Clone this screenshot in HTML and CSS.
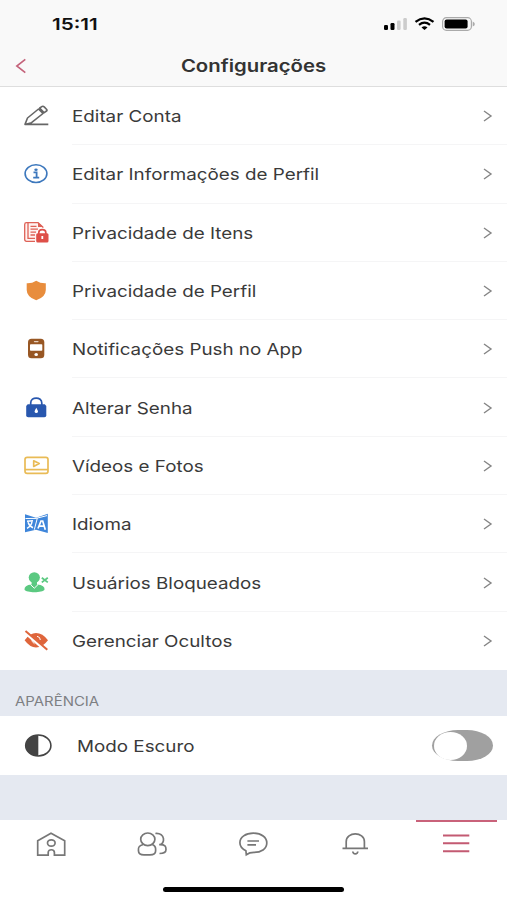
FILE: index.html
```html
<!DOCTYPE html>
<html lang="pt-BR">
<head>
<meta charset="utf-8">
<meta name="viewport" content="width=device-width, initial-scale=1">
<title>Configurações</title>
<link rel="stylesheet" href="styles.css">
</head>
<body>
<div class="screen">
  <header class="top">
    <div class="status">
      <span class="time">15:11</span>
      <svg class="status-icons" width="94" height="16" viewBox="0 0 94 16">
        <rect x="1" y="9" width="4" height="5" rx="1.2"/>
        <rect x="7.5" y="7" width="4" height="7" rx="1.2"/>
        <rect x="14" y="4.500" width="3.600" height="9.500" rx="1.200" fill="#ccc"/>
        <rect x="20.300" y="2" width="3.600" height="12" rx="1.200" fill="#ccc"/>
        <path d="M32.500 5.800Q41.500-1 50.500 5.800M36 8.800Q41.500 4.500 47 8.800" fill="none" stroke="#000" stroke-width="2.300"/>
        <path d="M38.500 11.500Q41.500 9 44.500 11.500L41.500 14Z"/>
        <rect x="59.600" y="1.700" width="28.800" height="12.600" rx="3.800" fill="none" stroke="#aaa" stroke-width="1.200"/>
        <rect x="61.600" y="3.600" width="23" height="9" rx="2"/>
        <path d="M89.700 5.500Q92 6.500 91.800 8Q92 9.500 89.700 10.500Z" fill="#aaa"/>
      </svg>
    </div>
    <div class="nav">
      <svg class="back" width="12" height="16" viewBox="0 0 12 16"><path d="M10.300 1.300L1.800 8L10.300 14.700"/></svg>
      <h1 class="title">Configurações</h1>
    </div>
  </header>

  <ul class="list">
    <li class="row"><svg class="icon" viewBox="0 0 30 30"><g fill="none" stroke="#666" stroke-width="1.600" stroke-linejoin="round"><path d="M4 23.400H27.300M4 23.400L6.500 17L17.500 8L22 12.500L10.500 21.700ZM18.700 7L21.200 5.400Q22.300 4.900 23.200 5.900L25.700 8.500Q26.400 9.400 25.500 10L23.200 11.700Z"/></g></svg><div class="cell"><span class="label">Editar Conta</span><svg class="chev" viewBox="0 0 10 12"><path d="M1 1L8 6L1 11"/></svg></div></li>
    <li class="row"><svg class="icon" viewBox="0 0 30 30"><ellipse cx="15" cy="14.600" rx="10.900" ry="8.900" fill="none" stroke="#3d78bd" stroke-width="1.600"/><ellipse cx="15" cy="10.700" rx="1.700" ry="1.300" fill="#3d78bd"/><path d="M12.500 13.400H15.600V18.600M12.200 18.700H18.200" fill="none" stroke="#3d78bd" stroke-width="1.800"/></svg><div class="cell"><span class="label">Editar Informações de Perfil</span><svg class="chev" viewBox="0 0 10 12"><path d="M1 1L8 6L1 11"/></svg></div></li>
    <li class="row"><svg class="icon" viewBox="0 0 30 30"><path d="M14 23.300H5.500Q3.700 23.300 3.700 21.500V6.500Q3.700 4.700 5.500 4.700H17L21.800 9V12" fill="#fff3f1" stroke="#de6257" stroke-width="1.300"/><path d="M7 4.700V20.300H14M9.500 8.300H15.500M9.500 11.200H17M9.500 14.100H15M9.500 17H14" fill="none" stroke="#de6257" stroke-width="1.300"/><path d="M17 4.200V9H22.300Z" fill="#de6257"/><path d="M17.800 16V14.500C17.800 10.700 24.800 10.700 24.800 14.500V16" fill="none" stroke="#fff" stroke-width="4"/><path d="M17.800 16V14.500C17.800 10.700 24.800 10.700 24.800 14.500V16" fill="none" stroke="#de4f48" stroke-width="1.700"/><rect x="15.200" y="15.200" width="12.300" height="9.300" rx="1.500" fill="#de4f48"/><path d="M20.400 18H22.200V21H20.400Z" fill="#fff"/></svg><div class="cell"><span class="label">Privacidade de Itens</span><svg class="chev" viewBox="0 0 10 12"><path d="M1 1L8 6L1 11"/></svg></div></li>
    <li class="row"><svg class="icon" viewBox="0 0 30 30"><path d="M15.200 4.700Q19.500 7.600 24.800 7.300V14Q24.800 21 15.200 24.300Q5.700 21 5.700 14V7.300Q11 7.600 15.200 4.700Z" fill="#e88d3d"/></svg><div class="cell"><span class="label">Privacidade de Perfil</span><svg class="chev" viewBox="0 0 10 12"><path d="M1 1L8 6L1 11"/></svg></div></li>
    <li class="row"><svg class="icon" viewBox="0 0 30 30"><rect x="7" y="4.700" width="16.300" height="19.500" rx="3.500" fill="#985724"/><rect x="9" y="10.300" width="12.300" height="6.500" rx=".8" fill="#fff"/><rect x="12.800" y="6.900" width="4.800" height="1.400" rx=".7" fill="#e5cfbd"/><ellipse cx="15.200" cy="20.500" rx="1.800" ry="1.500" fill="#fff"/></svg><div class="cell"><span class="label">Notificações Push no App</span><svg class="chev" viewBox="0 0 10 12"><path d="M1 1L8 6L1 11"/></svg></div></li>
    <li class="row"><svg class="icon" viewBox="0 0 30 30"><path d="M9.700 12V10C9.700 3.400 20.800 3.400 20.800 10V12" fill="none" stroke="#2857ae" stroke-width="1.700"/><path d="M6.700 11.200H23.800L25.300 13V22.500Q25.300 24.300 23.300 24.300H7.200Q5.200 24.300 5.200 22.500V13Z" fill="#2857ae"/><path d="M15.300 14.700L16.500 17Q18 19.800 15.300 19.900Q12.600 19.800 14.100 17Z" fill="#fff"/></svg><div class="cell"><span class="label">Alterar Senha</span><svg class="chev" viewBox="0 0 10 12"><path d="M1 1L8 6L1 11"/></svg></div></li>
    <li class="row"><svg class="icon" viewBox="0 0 30 30"><g fill="none" stroke="#e9bb56" stroke-width="1.700"><rect x="4" y="6.400" width="23" height="16" rx="2.200"/><path d="M4 18.600H27"/><path d="M12.700 9.800L18.200 12.600L12.700 15.400Z" stroke-linejoin="round"/></g></svg><div class="cell"><span class="label">Vídeos e Fotos</span><svg class="chev" viewBox="0 0 10 12"><path d="M1 1L8 6L1 11"/></svg></div></li>
    <li class="row"><svg class="icon" viewBox="0 0 30 30"><path d="M4 5.300L15 8.800L26.800 4.800V24L15 20.700L4 23.300Z" fill="#3f86da"/><path d="M4.500 9.500L15 9.400L26 6.600M16.300 9.200L13.300 20.700" fill="none" stroke="#fff" stroke-width="1"/><path d="M6 12.300L12 11.700M7 13.300Q8.500 17.500 12 18.800M11 12.500Q10.500 17 6 19.300" fill="none" stroke="#fff" stroke-width="1.500"/><path d="M17 19.500L20 12L21.700 12L24.300 20.700M18.300 17.200H23" fill="none" stroke="#fff" stroke-width="1.700"/></svg><div class="cell"><span class="label">Idioma</span><svg class="chev" viewBox="0 0 10 12"><path d="M1 1L8 6L1 11"/></svg></div></li>
    <li class="row"><svg class="icon" viewBox="0 0 30 30"><ellipse cx="13.300" cy="9.600" rx="5.600" ry="5.300" fill="#5bc981"/><path d="M10.600 13H16V16.500Q24.300 17.200 23.500 21.700C22 25 5 25 3.500 21.700Q3 17.200 10.600 16.500Z" fill="#5bc981"/><path d="M9.500 16.600L13.300 20.200L17 16.600" fill="none" stroke="#fff" stroke-width="1"/><path d="M20.800 9.800L26.800 14.400M26.800 9.800L20.800 14.400" stroke="#5bc981" stroke-width="1.800"/></svg><div class="cell"><span class="label">Usuários Bloqueados</span><svg class="chev" viewBox="0 0 10 12"><path d="M1 1L8 6L1 11"/></svg></div></li>
    <li class="row"><svg class="icon" viewBox="0 0 30 30"><path d="M3.600 14.200Q9 7 15 7Q21.500 7 27 14.200Q21.500 21.500 15 21.500Q9 21.500 3.600 14.200Z" fill="#df653b"/><path d="M16 10.300Q19.500 11 19.300 14M10.800 12.500Q10.300 16 13.500 17.800" fill="none" stroke="#fff" stroke-width="1"/><path d="M3.800 6L25.300 24.700" stroke="#fff" stroke-width="3.600"/><path d="M4.500 5L26.300 23.700" stroke="#df653b" stroke-width="2"/></svg><div class="cell"><span class="label">Gerenciar Ocultos</span><svg class="chev" viewBox="0 0 10 12"><path d="M1 1L8 6L1 11"/></svg></div></li>
  </ul>

  <h2 class="section"><span>APARÊNCIA</span></h2>
  <div class="mode">
    <svg class="contrast" width="28" height="24" viewBox="0 0 28 24"><ellipse cx="14.300" cy="11.500" rx="12.600" ry="10.500" fill="#fff" stroke="#444" stroke-width="1.600"/><path d="M14.300 1A12.600 10.500 0 0 0 14.300 22Z" fill="#444"/></svg>
    <span class="mode-label">Modo Escuro</span>
    <span class="switch"><span class="knob"></span></span>
  </div>
  <div class="gap"></div>

  <nav class="tabs">
    <a class="tab"><svg viewBox="0 0 34 28"><path d="M3.700 10.800L17 3.200L30.700 10.800V25.100H20.400V22.500C20.400 18.800 14.200 18.800 14.200 22.500V25.100H3.700Z"/><ellipse cx="17.300" cy="13" rx="3.800" ry="3.200"/></svg></a>
    <a class="tab"><svg viewBox="0 0 34 28"><ellipse cx="12.800" cy="9.300" rx="7.100" ry="6.300"/><path d="M8.200 14.500C2.200 16 3.500 19 3.500 21Q3.500 24.900 9 24.900H15Q20.600 24.900 20.600 21C20.600 18.500 21.500 16 17.300 14.500M20.400 3.500C30.500 2.500 30.500 14.500 24.200 14.700C30.500 14.500 31 16.500 31 19.500Q31 23.500 24.500 23.500"/></svg></a>
    <a class="tab"><svg viewBox="0 0 34 28"><path d="M17.400 3.200C25.500 3.200 30.800 7.500 30.800 13C30.800 19 25 22.400 18 22.400Q13.500 22.400 10.300 24.700L9.900 20.700C6 18.800 3.900 16.300 3.900 12.700C3.900 7.200 9.500 3.200 17.400 3.200ZM11.400 11H23M11.400 14.800H20"/></svg></a>
    <a class="tab"><svg viewBox="0 0 34 28"><path d="M4.500 18.300H30M8.200 18V11.700C8.200 1.300 26.400 1.300 26.400 11.700V18M14.800 21.500C15 24.600 19.600 24.600 19.800 21.500"/></svg></a>
    <a class="tab tab-active"><svg viewBox="0 0 34 28"><path d="M4 5.400H30.300M4 13.200H30.300M4 21.200H30.300"/></svg></a>
  </nav>
  <div class="home"></div>
</div>
</body>
</html>
```

FILE: styles.css
```css
* { box-sizing: border-box; margin: 0; padding: 0; }
body { font-family: Inter, "Liberation Sans", sans-serif; background: #fff; color: #3a3a3a; }
.screen { width: 507px; height: 900px; display: flex; flex-direction: column; overflow: hidden; background: #fff; }
.top { height: 87px; background: #f9f9f9; border-bottom: 1px solid #dedede; }
.status { height: 44px; padding: 4px 30px 0 52px; display: flex; align-items: center; justify-content: space-between; }
.time { font-size: 16.5px; font-weight: 600; color: #111; transform: scaleX(1.25); transform-origin: left; }
.nav { height: 43px; padding-top: 1px; display: grid; grid-template-columns: 40px 1fr 40px; align-items: center; }
.back { margin-left: 15px; fill: none; stroke: #c4627a; stroke-width: 1.6; }
.title { font-size: 17px; font-weight: 600; line-height: 24px; text-align: center; color: #333; transform: scaleX(1.195); }
.list { list-style: none; height: 583px; display: grid; grid-template-rows: repeat(10, 1fr); }
.row { display: flex; align-items: center; padding-left: 21px; }
.icon { width: 30px; height: 30px; margin-right: 21px; }
.cell { flex: 1; height: 100%; display: flex; align-items: center; justify-content: space-between; padding: 1px 14px 0 0; border-bottom: 1px solid #f5f5f6; }
.row:last-child .cell { border-bottom: 0; padding-top: 0; }
.label { font-size: 16.5px; transform: scaleX(1.14); transform-origin: left; white-space: nowrap; }
.chev { width: 10px; height: 12px; fill: none; stroke: #858585; stroke-width: 1.4; }
.section { height: 46px; padding: 21px 0 0 15px; background: #e5e9f1; font-size: 12.5px; line-height: 22px; font-weight: 400; color: #7d7f83; }
.section span { display: inline-block; transform: scaleX(1.195); transform-origin: left; }
.mode { height: 59px; display: flex; align-items: center; padding: 0 14px 0 24px; }
.contrast { margin-right: 25px; }
.mode-label { font-size: 16.5px; transform: scaleX(1.14); transform-origin: left; }
.switch { width: 61px; height: 31px; margin-left: auto; padding: 1.5px; border-radius: 26px / 15.5px; background: #a0a0a0; }
.knob { display: block; width: 33px; height: 28px; border-radius: 50%; background: #fff; }
.gap { height: 45px; background: #e5e9f1; }
.tabs { height: 50px; display: grid; grid-template-columns: repeat(5, 1fr); }
.tab { display: flex; justify-content: center; padding-top: 10px; }
.tab svg { width: 34px; height: 28px; fill: none; stroke: #777; stroke-width: 1.7; }
.tab-active { width: 81px; margin-left: 10px; border-top: 2px solid #c9627a; padding-top: 8px; }
.tab-active svg { stroke: #c35a72; stroke-width: 2; }
.home { width: 181px; height: 5px; margin: 17px auto 0; border-radius: 3px; background: #000; }
```
